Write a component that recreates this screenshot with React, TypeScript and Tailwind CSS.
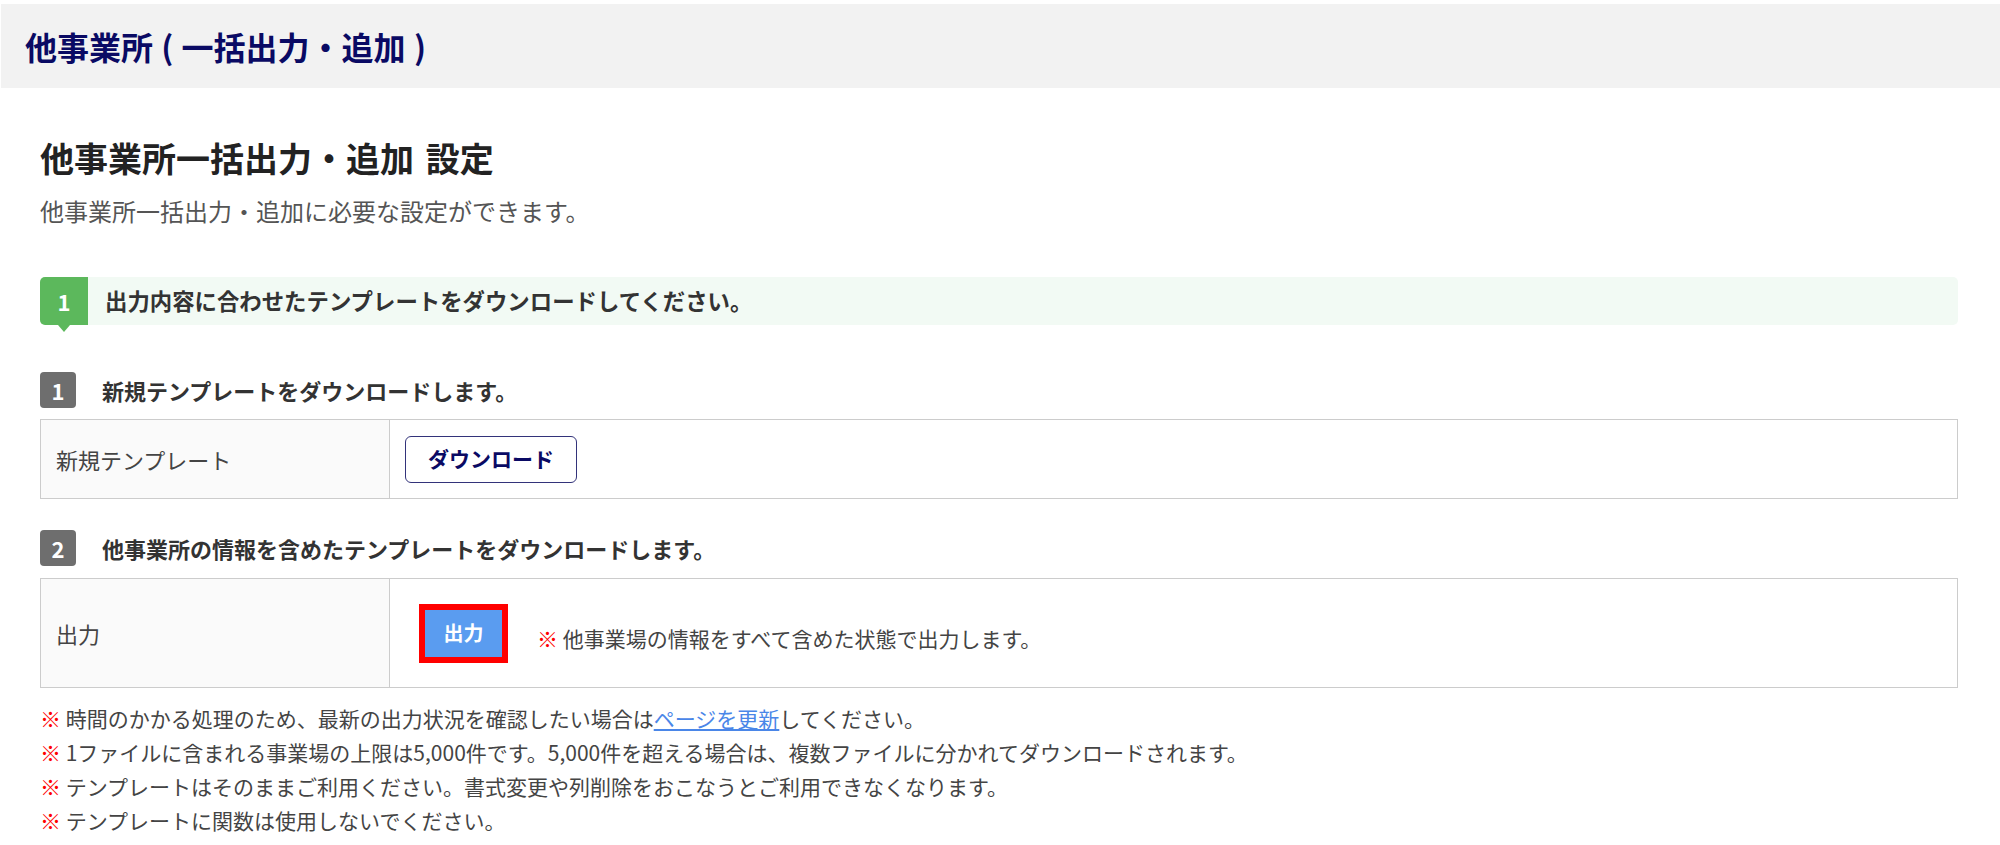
import React from 'react';

const Note: React.FC<{ children: React.ReactNode }> = ({ children }) => (
  <p className="text-[21px] leading-[34px] text-[#444]">
    <span className="text-[#ff0000] font-bold">※</span> {children}
  </p>
);

const StepBadge: React.FC<{ n: string; title: string }> = ({ n, title }) => (
  <div className="flex items-center h-[36px]">
    <div className="w-[36px] h-[36px] rounded-[4px] bg-[#6e6e6e] text-white font-bold text-[22px] flex items-center justify-center">
      {n}
    </div>
    <h3 className="ml-[26px] text-[22px] font-bold text-[#333] leading-[36px]">{title}</h3>
  </div>
);

export default function App() {
  return (
    <div className="min-h-screen bg-white font-['Noto_Sans_CJK_JP','Noto_Sans',sans-serif] pt-[4px] pl-[1px]">
      {/* page header */}
      <div className="h-[84px] bg-[#f2f2f2] flex items-center pl-[24px]">
        <h1 className="text-[32px] font-bold text-[#0a0a64] [word-spacing:1px] leading-none">
          他事業所 ( 一括出力・追加 )
        </h1>
      </div>

      <div className="ml-[39px] w-[1918px]">
        <h2 className="mt-[50px] text-[34px] font-bold text-[#222] leading-[40px] [word-spacing:4px]">
          他事業所一括出力・追加 設定
        </h2>
        <p className="mt-[17px] text-[24px] leading-[32px] text-[#555]">
          他事業所一括出力・追加に必要な設定ができます。
        </p>

        {/* step bar */}
        <div className="mt-[50px] h-[48px] flex items-center rounded-[5px] bg-[#f2faf4]">
          <div className="relative w-[48px] h-full rounded-l-[5px] bg-[#5cb85c] text-white font-bold text-[22px] flex items-center justify-center">
            1
            <span className="absolute left-1/2 -translate-x-1/2 -bottom-[7px] w-0 h-0 border-l-[6px] border-r-[6px] border-t-[7px] border-l-transparent border-r-transparent border-t-[#5cb85c]" />
          </div>
          <span className="ml-[17px] text-[22.4px] font-bold text-[#333]">
            出力内容に合わせたテンプレートをダウンロードしてください。
          </span>
        </div>

        <div className="mt-[47px]">
          <StepBadge n="1" title="新規テンプレートをダウンロードします。" />
        </div>
        <div className="mt-[11px] flex h-[80px] border border-[#cccccc]">
          <div className="w-[349px] shrink-0 bg-[#fafafa] border-r border-[#cccccc] flex items-center pl-[15px] text-[22px] text-[#444]">
            新規テンプレート
          </div>
          <div className="flex items-center pl-[15px]">
            <button className="w-[172px] h-[47px] rounded-[6px] border-[1.5px] border-[#33337a] bg-white text-[21px] font-bold text-[#0a0a64]">
              ダウンロード
            </button>
          </div>
        </div>

        <div className="mt-[31px]">
          <StepBadge n="2" title="他事業所の情報を含めたテンプレートをダウンロードします。" />
        </div>
        <div className="mt-[12px] flex h-[110px] border border-[#cccccc]">
          <div className="w-[349px] shrink-0 bg-[#fafafa] border-r border-[#cccccc] flex items-center pl-[15px] text-[22px] text-[#444]">
            出力
          </div>
          <div className="flex items-center pl-[29px]">
            <div className="border-[6px] border-[#ff0000]">
              <button className="w-[77px] h-[47px] bg-[#5a9cf0] text-white text-[20px] font-bold flex items-center justify-center">
                出力
              </button>
            </div>
            <span className="ml-[29px] pt-[12px] text-[21px] text-[#444]">
              <span className="text-[#ff0000] font-bold">※</span> 他事業場の情報をすべて含めた状態で出力します。
            </span>
          </div>
        </div>

        <div className="mt-[13px]">
          <Note>
            時間のかかる処理のため、最新の出力状況を確認したい場合は
            <a href="#" className="text-[#4a86e8] underline">ページを更新</a>
            してください。
          </Note>
          <Note>1ファイルに含まれる事業場の上限は5,000件です。5,000件を超える場合は、複数ファイルに分かれてダウンロードされます。</Note>
          <Note>テンプレートはそのままご利用ください。書式変更や列削除をおこなうとご利用できなくなります。</Note>
          <Note>テンプレートに関数は使用しないでください。</Note>
        </div>
      </div>
    </div>
  );
}
